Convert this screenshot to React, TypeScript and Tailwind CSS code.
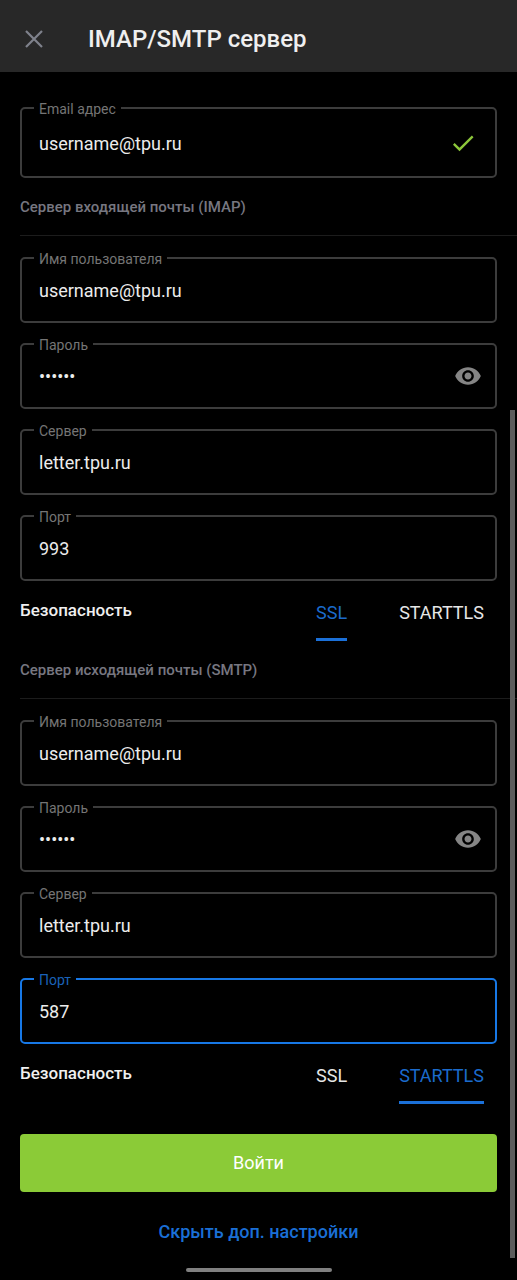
import React, { useState } from 'react'
import clsx from 'clsx'

type FieldProps = {
    id: string
    label: string
    value: string
    onChange: (value: string) => void
    type?: string
    active: boolean
    onActivate: () => void
    tall?: boolean
    children?: React.ReactNode
}

function Field({ id, label, value, onChange, type = 'text', active, onActivate, tall, children }: FieldProps) {
    return (
        <div
            className={clsx(
                'relative flex items-center rounded-[5px] border-2 pl-[17px]',
                active ? 'border-[#1778e6]' : 'border-[#3c3c3c]',
                tall ? 'h-[71px]' : 'h-[66px]'
            )}
        >
            <label
                htmlFor={id}
                className={clsx(
                    'absolute -top-2 left-3 bg-black px-[5px] text-[14px] leading-4',
                    active ? 'text-[#1a62b8]' : 'text-[#757575]'
                )}
            >
                {label}
            </label>
            <input
                id={id}
                type={type}
                value={value}
                onChange={(e) => onChange(e.target.value)}
                onFocus={onActivate}
                className="min-w-0 flex-1 bg-transparent pt-0.5 text-[18px] leading-6 text-[#ececec] outline-none"
            />
            {children}
        </div>
    )
}

function EyeIcon() {
    return (
        <svg viewBox="0 0 24 24" className="size-7" fill="currentColor" aria-hidden="true">
            <path d="M12 4.5C7 4.5 2.73 7.61 1 12c1.73 4.39 6 7.5 11 7.5s9.27-3.11 11-7.5c-1.73-4.39-6-7.5-11-7.5zM12 17c-2.76 0-5-2.24-5-5s2.24-5 5-5 5 2.24 5 5-2.24 5-5 5zm0-8c-1.66 0-3 1.34-3 3s1.34 3 3 3 3-1.34 3-3-1.34-3-3-3z" />
        </svg>
    )
}

const securityModes = ['SSL', 'STARTTLS']

function SecurityTabs({ value, onChange }: { value: string; onChange: (value: string) => void }) {
    return (
        <div className="flex items-start justify-between pr-[13px]">
            <span className="pt-[17px] text-[17px] leading-6 font-medium text-[#efefef]">Безопасность</span>
            <div role="tablist" aria-label="Безопасность" className="flex gap-[52px]">
                {securityModes.map((mode) => (
                    <button
                        key={mode}
                        type="button"
                        role="tab"
                        aria-selected={mode === value}
                        onClick={() => onChange(mode)}
                        className={clsx(
                            'border-b-3 pt-5 pb-[13px] text-[18px] leading-6',
                            mode === value ? 'border-[#1b70d8] text-[#1b6bcc]' : 'border-transparent text-[#e6e6e6]'
                        )}
                    >
                        {mode}
                    </button>
                ))}
            </div>
        </div>
    )
}

type ServerProps = {
    prefix: string
    title: string
    port: string
    security: string
    activeField: string
    setActiveField: (id: string) => void
}

function ServerSection({ prefix, title, port, security, activeField, setActiveField }: ServerProps) {
    const [values, setValues] = useState({ user: 'username@tpu.ru', password: '123456', server: 'letter.tpu.ru', port })
    const [mode, setMode] = useState(security)
    const [visible, setVisible] = useState(false)

    const bind = (key: keyof typeof values) => ({
        id: `${prefix}-${key}`,
        value: values[key],
        onChange: (value: string) => setValues({ ...values, [key]: value }),
        active: activeField === `${prefix}-${key}`,
        onActivate: () => setActiveField(`${prefix}-${key}`),
    })

    return (
        <section>
            {/* the divider runs to the right edge of the screen */}
            <h2 className="mt-[19px] -mr-5 border-b border-[#1c1c1c] pb-[18px] text-[15px] leading-5 font-medium text-[#777780]">
                {title}
            </h2>
            <div className="mt-[21px] flex flex-col gap-5">
                <Field label="Имя пользователя" {...bind('user')} />
                <Field label="Пароль" type={visible ? 'text' : 'password'} {...bind('password')}>
                    <button
                        type="button"
                        aria-label="Показать пароль"
                        onClick={() => setVisible(!visible)}
                        className="mr-[13px] text-[#858585]"
                    >
                        <EyeIcon />
                    </button>
                </Field>
                <Field label="Сервер" {...bind('server')} />
                <Field label="Порт" {...bind('port')} />
            </div>
            <SecurityTabs value={mode} onChange={setMode} />
        </section>
    )
}

export default function App() {
    const [email, setEmail] = useState('username@tpu.ru')
    const [activeField, setActiveField] = useState('smtp-port')

    return (
        <div className="relative min-h-screen bg-black font-[Roboto,sans-serif]">
            <header className="flex h-[72px] items-center bg-[#282828] pt-1.5 pl-5">
                <button type="button" aria-label="Закрыть" className="text-[#7f828c]">
                    <svg viewBox="0 0 28 28" className="size-7" fill="none" stroke="currentColor" strokeWidth="2.2" aria-hidden="true">
                        <path d="M6 6l16 16M22 6L6 22" />
                    </svg>
                </button>
                <h1 className="ml-10 text-[24px] leading-8 font-medium text-[#efefef]">IMAP/SMTP сервер</h1>
            </header>

            <form className="px-5 pt-[35px]" onSubmit={(e) => e.preventDefault()}>
                <Field
                    id="email"
                    label="Email адрес"
                    value={email}
                    onChange={setEmail}
                    active={activeField === 'email'}
                    onActivate={() => setActiveField('email')}
                    tall
                >
                    <svg viewBox="0 0 24 24" className="mr-[18px] size-7 text-[#8cc63a]" fill="currentColor" aria-hidden="true">
                        <path d="M9 16.17L4.83 12l-1.42 1.41L9 19 21 7l-1.41-1.41z" />
                    </svg>
                </Field>
                <ServerSection
                    prefix="imap"
                    title="Сервер входящей почты (IMAP)"
                    port="993"
                    security="SSL"
                    activeField={activeField}
                    setActiveField={setActiveField}
                />
                <ServerSection
                    prefix="smtp"
                    title="Сервер исходящей почты (SMTP)"
                    port="587"
                    security="STARTTLS"
                    activeField={activeField}
                    setActiveField={setActiveField}
                />
                <button type="submit" className="mt-[30px] h-[58px] w-full rounded bg-[#8bcb37] text-[18px] leading-6 text-white">
                    Войти
                </button>
                <button type="button" className="mt-7 block w-full text-[18px] leading-6 font-medium text-[#1a6fd6]">
                    Скрыть доп. настройки
                </button>
            </form>

            <div className="flex justify-center pt-6 pb-2">
                <div className="h-1 w-[146px] rounded-full bg-[#808080]" />
            </div>

            {/* scroll indicator */}
            <div className="absolute top-[32%] right-[2px] bottom-[22px] w-[5px] bg-[#5c5c5c]" />
        </div>
    )
}
